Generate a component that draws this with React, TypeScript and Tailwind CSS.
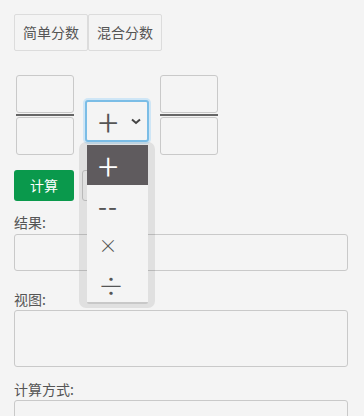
import React, { useState } from 'react';

const ops = ['+', '--', '×', '÷'];
const opSize: Record<string, string> = {
  '+': 'text-[38px] font-light',
  '--': 'text-[26px] font-normal tracking-[1px]',
  '×': 'text-[19px] font-light',
  '÷': 'text-[26px] font-light',
};

const FractionInput: React.FC = () => (
  <div className="flex flex-col w-[58px]">
    <div className="h-[38px] rounded-[3px] border border-[#c9c9c9] bg-[#f4f4f4]"></div>
    <div className="h-[2px] mt-[1px] mb-[1px] bg-[#666]"></div>
    <div className="h-[38px] rounded-[3px] border border-[#c9c9c9] bg-[#f4f4f4]"></div>
  </div>
);

const App: React.FC = () => {
  const [tab, setTab] = useState(0);
  const [op, setOp] = useState(0);

  return (
    <div
      className="min-h-screen bg-[#f4f4f4] text-[#555] px-[14px] pt-[14px]"
      style={{ fontFamily: '"Noto Sans CJK SC", "Noto Sans", sans-serif' }}
    >
      {/* Tabs */}
      <div className="flex">
        {['简单分数', '混合分数'].map((t, i) => (
          <button
            key={t}
            onClick={() => setTab(i)}
            className="h-[37px] px-[8px] border border-[#dcdcdc] rounded-[2px] text-[14px] text-[#555] bg-[#f4f4f4]"
            data-active={tab === i}
          >
            {t}
          </button>
        ))}
      </div>

      {/* Fraction row */}
      <div className="relative flex items-start mt-[24px] pl-[2px]">
        <FractionInput />
        <div className="ml-[9px] mt-[23px] p-[2px] rounded-[5px] bg-[#cfe6f6]">
          <div className="w-[64px] h-[42px] rounded-[3px] border-2 border-[#7bbde6] bg-[#f4f4f4] flex items-center pl-[11px] pr-[5px]">
            <span className="w-[20px] text-center leading-[20px] text-[38px] font-light text-[#555]">{ops[op]}</span>
            <svg className="ml-auto mr-[1px]" width="10" height="7" viewBox="0 0 10 7">
              <path d="M1 1.5 L5 5 L9 1.5" fill="none" stroke="#444" strokeWidth="2" />
            </svg>
          </div>
        </div>
        <div className="ml-[9px]">
          <FractionInput />
        </div>

        {/* Open select list */}
        <div className="absolute left-[65px] top-[67px] w-[76px] h-[166px] rounded-[7px] bg-black/[0.08] z-10">
          <div className="absolute left-[8px] top-[3px] w-[61px] h-[159px] bg-[#f4f4f4] border-b-2 border-[#c8c8c8] rounded-b-[2px]">
            {ops.map((o, i) => (
              <div
                key={o}
                onClick={() => setOp(i)}
                className={`h-[40px] flex items-center pl-[11px] ${
                  i === op ? 'bg-[#5f5b5e] text-white' : 'text-[#555]'
                }`}
              >
                <span className={`w-[20px] text-center leading-[20px] whitespace-nowrap ${opSize[o]}`}>{o}</span>
              </div>
            ))}
          </div>
        </div>
      </div>

      {/* Buttons */}
      <div className="flex mt-[15px] gap-[8px]">
        <button className="w-[60px] h-[31px] rounded-[3px] bg-[#0a994c] text-white text-[14px]">计算</button>
        <button className="w-[60px] h-[31px] rounded-[3px] border border-[#c9c9c9] text-[14px] text-[#555]">清空</button>
      </div>

      {/* Result */}
      <div className="mt-[11px] text-[14px] leading-[20px]">结果:</div>
      <div className="mt-[2px] h-[37px] w-[334px] rounded-[3px] border border-[#c9c9c9]"></div>

      <div className="mt-[18px] text-[14px] leading-[20px]">视图:</div>
      <div className="mt-[1px] h-[57px] w-[334px] rounded-[3px] border border-[#c9c9c9]"></div>

      <div className="mt-[12px] text-[14px] leading-[20px]">计算方式:</div>
      <div className="mt-[1px] h-[37px] w-[334px] rounded-[3px] border border-[#c9c9c9]"></div>
    </div>
  );
};

export default App;
